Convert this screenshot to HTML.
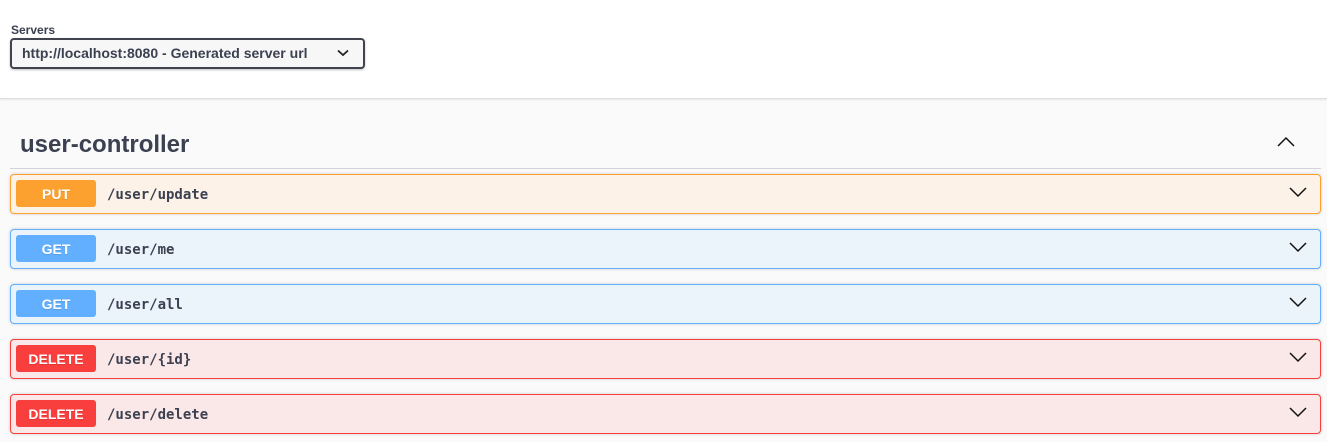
<!DOCTYPE html>
<html><head><style>
body{margin:0;width:1327px;height:442px;overflow:hidden;font-family:"Liberation Sans",sans-serif;background:#fafafa;}
.top{position:absolute;left:0;top:0;width:1327px;height:98px;background:#fff;border-bottom:1px solid #ddd;box-shadow:0 1px 2px rgba(0,0,0,.08);}
.lbl{position:absolute;left:11px;top:23px;font-size:12px;font-weight:bold;color:#3b4151;}
.sel{position:absolute;left:10px;top:38px;height:27px;border:2px solid #41444e;border-radius:4px;background:#f7f7f7;box-shadow:0 1px 2px rgba(0,0,0,.25);font-size:14px;font-weight:bold;color:#3b4151;line-height:27px;padding-left:10px;width:341px;}
.sel svg{position:absolute;right:14px;top:9px;}
.title{position:absolute;left:20px;top:131px;font-size:24px;font-weight:bold;color:#3b4151;}
.tline{position:absolute;left:10px;top:168px;width:1311px;height:1px;background:#d4d4d8;}
.up{position:absolute;left:1277px;top:136px;}
.op{position:absolute;left:10px;width:1309px;height:38px;border:1px solid;border-radius:4px;box-shadow:0 0 3px rgba(0,0,0,.19);}
.m{position:absolute;left:5px;top:5px;width:80px;height:27px;border-radius:3px;color:#fff;font-weight:bold;font-size:14px;text-align:center;line-height:29px;text-shadow:0 1px 0 rgba(0,0,0,.1);}
.p{position:absolute;left:96px;top:1px;line-height:38px;font-family:"DejaVu Sans Mono","Liberation Mono",monospace;font-weight:bold;font-size:14px;color:#3b4151;}
.ch{position:absolute;right:13px;top:11px;}
.put{background:#fcf2e8;border-color:#fca130}.put .m{background:#fca130}
.get{background:#ebf3fb;border-color:#61affe}.get .m{background:#61affe}
.del{background:#fae7e7;border-color:#f93e3e}.del .m{background:#f93e3e}
</style></head><body>
<div class="top">
<div class="lbl">Servers</div>
<div class="sel">http://localhost:8080 - Generated server url
<svg width="12" height="8" viewBox="0 0 12 8"><path d="M1 1.5l5 4.5 5-4.5" stroke="#222" stroke-width="1.8" fill="none"/></svg></div>
</div>
<div class="title">user-controller</div>
<svg class="up" width="18" height="11" viewBox="0 0 18 11"><path d="M1 10l8-8 8 8" stroke="#111" stroke-width="1.5" fill="none"/></svg>
<div class="tline"></div>
<div class="op put" style="top:174px"><div class="m">PUT</div><div class="p">/user/update</div><svg class="ch" width="18" height="12" viewBox="0 0 18 12"><path d="M1 2l8 8 8-8" stroke="#111" stroke-width="1.5" fill="none"/></svg></div>
<div class="op get" style="top:229px"><div class="m">GET</div><div class="p">/user/me</div><svg class="ch" width="18" height="12" viewBox="0 0 18 12"><path d="M1 2l8 8 8-8" stroke="#111" stroke-width="1.5" fill="none"/></svg></div>
<div class="op get" style="top:284px"><div class="m">GET</div><div class="p">/user/all</div><svg class="ch" width="18" height="12" viewBox="0 0 18 12"><path d="M1 2l8 8 8-8" stroke="#111" stroke-width="1.5" fill="none"/></svg></div>
<div class="op del" style="top:339px"><div class="m">DELETE</div><div class="p">/user/{id}</div><svg class="ch" width="18" height="12" viewBox="0 0 18 12"><path d="M1 2l8 8 8-8" stroke="#111" stroke-width="1.5" fill="none"/></svg></div>
<div class="op del" style="top:394px"><div class="m">DELETE</div><div class="p">/user/delete</div><svg class="ch" width="18" height="12" viewBox="0 0 18 12"><path d="M1 2l8 8 8-8" stroke="#111" stroke-width="1.5" fill="none"/></svg></div>
</body></html>
